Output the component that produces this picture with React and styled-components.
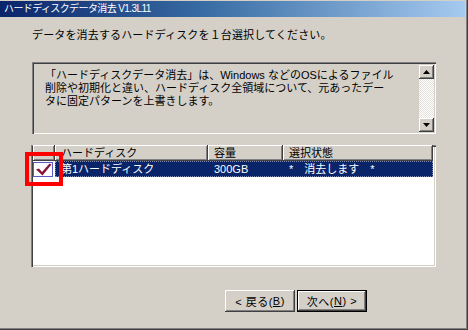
import React from 'react';
import styled, { createGlobalStyle } from 'styled-components';

const GlobalStyle = createGlobalStyle`
  html, body {
    margin: 0;
    padding: 0;
    background: #d4d0c8;
  }
  * {
    box-sizing: border-box;
  }
`;

const FONT = `"Liberation Sans", "Noto Sans CJK JP", sans-serif`;

const Window = styled.div`
  width: 468px;
  height: 330px;
  background: #d4d0c8;
  font-family: ${FONT};
  color: #000;
  box-shadow: inset -1px -1px #404040, inset -2px -2px #808080;
  padding-top: 1px;
  overflow: hidden;
`;

const TitleBar = styled.div`
  height: 16px;
  margin-right: 3px;
  background: linear-gradient(to right, #0a246a 0%, #3a6ea5 45%, #a6caf0 100%);
  display: flex;
  align-items: center;
  padding-left: 4px;
`;

const Title = styled.span`
  color: #fff;
  font-size: 10px;
  letter-spacing: -0.6px;
  line-height: 16px;
  white-space: pre;
`;

const Body = styled.div`
  padding: 12px 0 0 31px;
  display: flex;
  flex-direction: column;
`;

const Prompt = styled.div`
  margin-left: 1px;
  font-size: 11px;
  line-height: 13px;
  height: 13px;
  letter-spacing: 0.15px;
  white-space: nowrap;
`;

const InfoBox = styled.div`
  margin: 20px 0 0 1px;
  width: 404px;
  height: 72px;
  display: flex;
  background: #d4d0c8;
  box-shadow: inset 1px 1px #808080, inset 2px 2px #404040, inset -1px -1px #fff, inset -2px -2px #d4d0c8;
  padding: 2px;
`;

const InfoText = styled.div`
  flex: 1;
  padding: 5px 0 0 11px;
  font-size: 11px;
  line-height: 13px;
  white-space: nowrap;
`;

const ScrollBar = styled.div`
  width: 15px;
  margin: 1px 0 0 0;
  display: flex;
  flex-direction: column;
  background:
    repeating-conic-gradient(#ffffff 0% 25%, #e4e1db 0% 50%) 0 0 / 2px 2px;
`;

const ScrollButton = styled.div`
  width: 15px;
  height: 14px;
  background: #d4d0c8;
  box-shadow: inset -1px -1px #404040, inset 1px 1px #fff, inset -2px -2px #808080;
  display: flex;
  align-items: center;
  justify-content: center;
`;

const ScrollTrack = styled.div`
  flex: 1;
`;

const ListWrap = styled.div`
  position: relative;
  margin-top: 11px;
  width: 405px;
  height: 122px;
`;

const ListView = styled.div`
  width: 100%;
  height: 100%;
  background: #fff;
  box-shadow: inset 1px 1px #808080, inset 2px 2px #404040, inset -1px -1px #fff, inset -2px -2px #d4d0c8;
  padding: 0 2px 2px 2px;
`;

const HeaderRow = styled.div`
  display: flex;
  height: 16px;
`;

const HeaderCell = styled.div`
  width: ${(p) => p.$w}px;
  flex-shrink: 0;
  height: 16px;
  background: #d4d0c8;
  box-shadow: inset -1px -1px #404040, inset 1px 1px #fff, inset -2px -2px #808080;
  font-size: 11px;
  line-height: 16px;
  padding-left: 6px;
  white-space: nowrap;
`;

const Row = styled.div`
  display: flex;
  height: 16px;
`;

const CheckCell = styled.div`
  width: ${(p) => p.$w}px;
  flex-shrink: 0;
  display: flex;
  align-items: center;
  justify-content: flex-start;
  padding-top: 1px;
`;

const SelectedCells = styled.div`
  display: flex;
  background: #0a246a;
  color: #fff;
  outline: 1px dotted #7f8cb8;
  outline-offset: -1px;
`;

const Cell = styled.div`
  width: ${(p) => p.$w}px;
  flex-shrink: 0;
  font-size: 11px;
  line-height: 16px;
  padding-left: 6px;
  white-space: pre;
`;

const Highlight = styled.div`
  position: absolute;
  left: -6px;
  top: 7px;
  width: 38px;
  height: 34px;
  border: 4px solid #ff0000;
  pointer-events: none;
`;

const Footer = styled.div`
  display: flex;
  gap: 2px;
  margin-top: 23px;
  padding-left: 194px;
`;

const Button = styled.div`
  width: 70px;
  height: 22px;
  background: #d4d0c8;
  font-size: 11px;
  letter-spacing: 0.5px;
  display: flex;
  align-items: center;
  justify-content: center;
  white-space: pre;
  box-shadow: ${(p) =>
    p.$default
      ? 'inset 0 0 0 1px #000, inset -2px -2px #404040, inset 2px 2px #fff, inset -3px -3px #808080'
      : 'inset -1px -1px #404040, inset 1px 1px #fff, inset -2px -2px #808080'};
`;

const Key = styled.span`
  text-decoration: underline;
`;

const Arrow = ({ up }) => (
  <svg width="7" height="4" viewBox="0 0 7 4">
    <polygon points={up ? '3.5,0 7,4 0,4' : '0,0 7,0 3.5,4'} fill="#000" />
  </svg>
);

const CheckBox = () => (
  <svg width="20" height="15" viewBox="0 0 20 15">
    <rect x="0.5" y="0.5" width="19" height="14" fill="#fff" stroke="#5a5ac8" />
    <path d="M3 7.5 L6 6.5 L9 10 L16.5 1.5 L18.5 2.5 L9.5 13.5 Z" fill="#8a1538" />
  </svg>
);

const columns = [
  { key: 'chk', w: 22, label: '' },
  { key: 'name', w: 153, label: 'ハードディスク' },
  { key: 'size', w: 75, label: '容量' },
  { key: 'state', w: 150, label: '選択状態' },
];

const App = () => {
  return (
    <>
      <GlobalStyle />
      <Window>
        <TitleBar>
          <Title>ハードディスクデータ消去 V1.3L11</Title>
        </TitleBar>
        <Body>
          <Prompt>データを消去するハードディスクを１台選択してください。</Prompt>
          <InfoBox>
            <InfoText>
              「ハードディスクデータ消去」は、Windows などのOSによるファイル
              <br />
              削除や初期化と違い、ハードディスク全領域について、元あったデー
              <br />
              タに固定パターンを上書きします。
            </InfoText>
            <ScrollBar>
              <ScrollButton>
                <Arrow up />
              </ScrollButton>
              <ScrollTrack />
              <ScrollButton>
                <Arrow />
              </ScrollButton>
            </ScrollBar>
          </InfoBox>
          <ListWrap>
            <ListView>
              <HeaderRow>
                {columns.map((c) => (
                  <HeaderCell key={c.key} $w={c.w}>
                    {c.label}
                  </HeaderCell>
                ))}
              </HeaderRow>
              <Row>
                <CheckCell $w={22}>
                  <CheckBox />
                </CheckCell>
                <SelectedCells>
                  <Cell $w={153}>第1ハードディスク</Cell>
                  <Cell $w={75}>300GB</Cell>
                  <Cell $w={150}>*　消去します　*</Cell>
                </SelectedCells>
              </Row>
            </ListView>
            <Highlight />
          </ListWrap>
          <Footer>
            <Button>
              {'< 戻る('}<Key>B</Key>{')'}
            </Button>
            <Button $default>
              {'次へ('}<Key>N</Key>{') >'}
            </Button>
          </Footer>
        </Body>
      </Window>
    </>
  );
};

export default App;
